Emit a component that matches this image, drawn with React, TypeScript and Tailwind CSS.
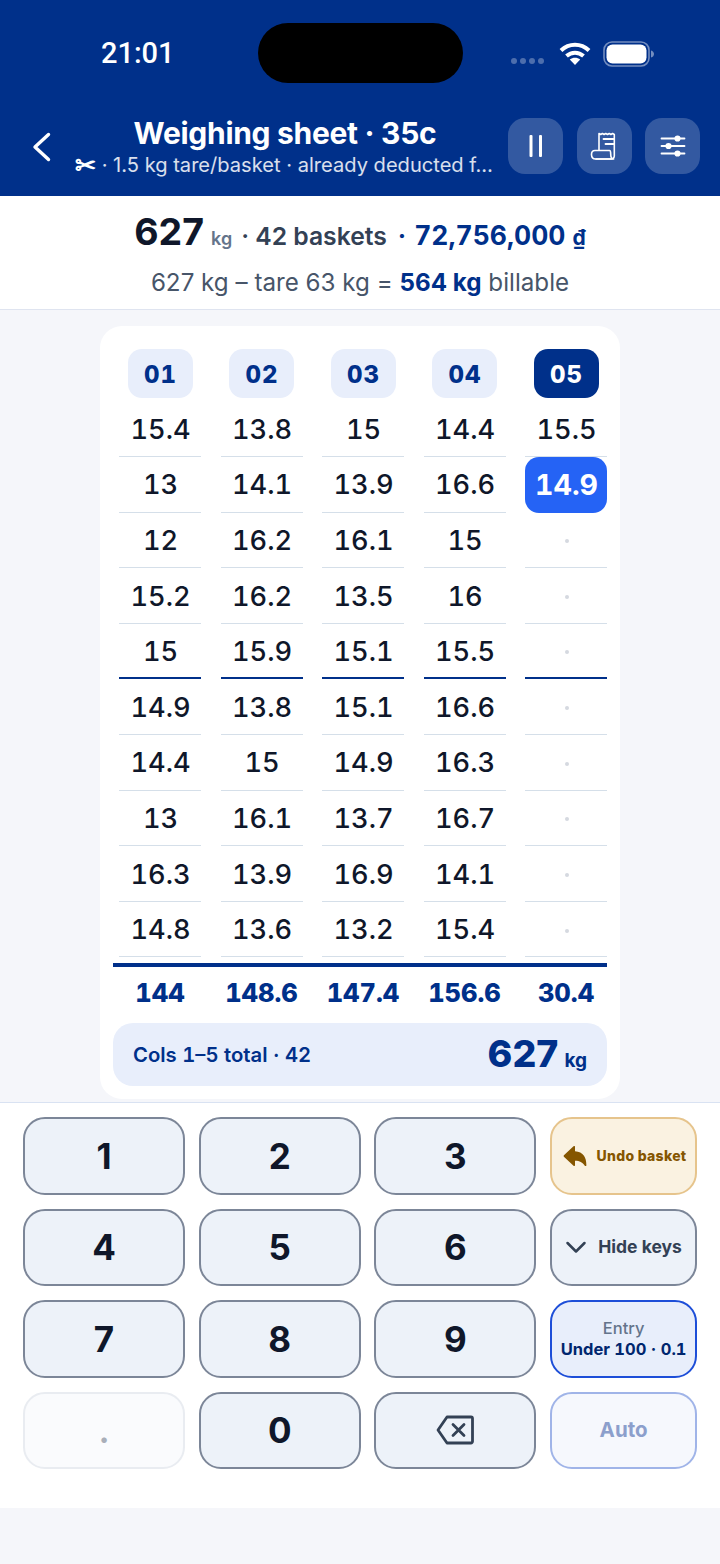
import React from "react";
import { IoArrowUndo } from "react-icons/io5";

const cols = [
  { h: "01", v: ["15.4", "13", "12", "15.2", "15", "14.9", "14.4", "13", "16.3", "14.8"], s: "144" },
  { h: "02", v: ["13.8", "14.1", "16.2", "16.2", "15.9", "13.8", "15", "16.1", "13.9", "13.6"], s: "148.6" },
  { h: "03", v: ["15", "13.9", "16.1", "13.5", "15.1", "15.1", "14.9", "13.7", "16.9", "13.2"], s: "147.4" },
  { h: "04", v: ["14.4", "16.6", "15", "16", "15.5", "16.6", "16.3", "16.7", "14.1", "15.4"], s: "156.6" },
  { h: "05", v: ["15.5", "14.9", "", "", "", "", "", "", "", ""], s: "30.4" },
];

function HeadBtn({ children }: { children: React.ReactNode }) {
  return <div className="w-[55px] h-[56px] rounded-[17px] bg-white/20 flex items-center justify-center">{children}</div>;
}

function Key({ children }: { children: React.ReactNode }) {
  return (
    <div className="h-[77.5px] rounded-[22px] border-2 border-[#7c8698] bg-[#edf2f9] flex items-center justify-center text-[35px] font-bold text-[#0f172a]">
      {children}
    </div>
  );
}

export default function App() {
  return (
    <div className="w-[720px] h-[1564px] bg-[#f5f6fa] overflow-hidden font-['Inter',sans-serif]">
      <header className="h-[196px] bg-[#00308a] text-white flex flex-col">
        <div className="h-[118px] relative flex items-start">
          <span className="ml-[101px] mt-[36px] text-[29px] leading-[34px] font-medium font-['Roboto',sans-serif]">21:01</span>
          <div className="absolute left-[258px] top-[23px] w-[205px] h-[60px] rounded-[30px] bg-black" />
          <div className="absolute left-[511px] top-[58px] flex gap-[3px]">
            {[0, 1, 2, 3].map((i) => (
              <span key={i} className="w-[6px] h-[6px] rounded-full bg-white/30" />
            ))}
          </div>
          <svg className="absolute left-[559px] top-[41px]" width="32" height="25" viewBox="0 0 32 25" fill="none" stroke="#fff" strokeWidth="4">
            <path d="M2 9.5C10 1.8 22 1.8 30 9.5" />
            <path d="M7.5 15C12.5 10.5 19.5 10.5 24.5 15" />
            <path d="M16 24l-5.2-5.4c3-2.4 7.4-2.4 10.4 0z" fill="#fff" stroke="none" />
          </svg>
          <svg className="absolute left-[603px] top-[41px]" width="51" height="26" viewBox="0 0 51 26" fill="none">
            <rect x="1" y="1" width="45" height="24" rx="8" stroke="#fff" strokeOpacity="0.45" strokeWidth="1.6" />
            <rect x="3.5" y="3.5" width="40" height="19" rx="6" fill="#fff" />
            <path d="M48 9.5c2 .5 3 2 3 3.5s-1 3-3 3.5z" fill="#fff" fillOpacity="0.45" />
          </svg>
        </div>
        <div className="flex items-start">
          <svg className="ml-[32px] mt-[14px] shrink-0" width="20" height="30" viewBox="0 0 20 30" fill="none" stroke="#fff" strokeWidth="3.4" strokeLinecap="round" strokeLinejoin="round">
            <path d="M16.5 2.5L3 15l13.5 12.5" />
          </svg>
          <div className="ml-[23px] w-[420px] flex flex-col items-center">
            <div className="text-[30px] leading-[30px] font-bold tracking-[-0.01em] whitespace-nowrap">Weighing sheet · 35c</div>
            <div className="w-[420px] text-[20.1px] leading-[26px] mt-[4px] text-white/85 whitespace-nowrap flex items-center">
              <span className="text-[25px] leading-[26px] font-bold text-white">✂</span>
              <span>&nbsp;· 1.5 kg tare/basket · already deducted f…</span>
            </div>
          </div>
          <div className="ml-[13px] flex gap-[13.5px]">
            <HeadBtn>
              <svg width="16" height="24" viewBox="0 0 16 24" fill="#fff">
                <rect x="1.5" y="1" width="3" height="22" rx="1" />
                <rect x="11" y="1" width="3" height="22" rx="1" />
              </svg>
            </HeadBtn>
            <HeadBtn>
              <svg width="30" height="30" viewBox="0 0 30 30" fill="none" stroke="#fff" strokeWidth="1.6" strokeLinejoin="round" strokeLinecap="round">
                <path d="M10 19V2.5l1.7 1 1.7-1 1.7 1 1.7-1 1.7 1 1.7-1 1.7 1 1.7-1 1.7 1V25a3 3 0 0 1-3 3H7" />
                <path d="M14.5 8h10M16.5 13h8" strokeWidth="1.8" />
                <path d="M2.5 23.5c0-2.5 1.3-4 3.500-4h14.5c1.2 0 1.2 1 1.2 3.5 0 3.2 1 5 3 5H6.5c-2.5 0-4-1.5-4-4.500z" />
              </svg>
            </HeadBtn>
            <HeadBtn>
              <svg width="26" height="22" viewBox="0 0 26 22" fill="none" stroke="#fff" strokeWidth="1.8" strokeLinecap="round">
                <path d="M1.5 3.5h23M1.5 11h23M1.5 18.5h23" />
                <circle cx="17.5" cy="3.5" r="2.2" fill="#fff" />
                <circle cx="8.5" cy="11" r="2.2" fill="#fff" />
                <circle cx="17.5" cy="18.5" r="2.2" fill="#fff" />
              </svg>
            </HeadBtn>
          </div>
        </div>
      </header>

      <section className="h-[114px] bg-white border-b border-[#dfe4f0] flex flex-col items-center">
        <div className="mt-[8px] h-[50px] flex items-baseline whitespace-nowrap">
          <span className="text-[37.5px] font-bold text-[#0f172a]">627</span>
          <span className="ml-[7px] text-[18px] font-semibold text-[#64748b]">kg</span>
          <span className="ml-[9px] text-[24.7px] font-semibold text-[#334155]">· 42 baskets</span>
          <span className="ml-[11px] text-[25px] font-bold text-[#00308a]">·</span>
          <span className="ml-[8px] text-[26.5px] font-bold tabular-nums text-[#00308a]">72,756,000</span>
          <span className="ml-[7px] text-[21px] font-bold text-[#00308a]">₫</span>
        </div>
        <div className="mt-[13px] text-[24.2px] leading-[32px] text-[#475569] whitespace-nowrap">
          627 kg – tare 63 kg = <b className="font-bold text-[#00308a]">564 kg</b> billable
        </div>
      </section>

      <main className="flex justify-center pt-[16px] mb-[3px]">
        <div className="w-[520px] h-[773px] bg-white rounded-[22px] px-[13px] pt-[23px]">
          <div className="pl-[6px] grid grid-cols-[82px_82px_82px_82px_82px] gap-x-[19.5px]">
            {cols.map((c, ci) => (
              <div key={c.h} className="flex flex-col items-stretch">
                <div
                  className={
                    ci === 4
                      ? "mx-auto w-[65px] h-[49px] mb-[3.5px] pt-[2px] pl-[1px] rounded-[14px] bg-[#00308a] text-white flex items-center justify-center text-[24px] font-extrabold tabular-nums tracking-[0.04em]"
                      : "mx-auto w-[65px] h-[49px] mb-[3.5px] pt-[2px] pl-[1px] rounded-[14px] bg-[#e8eefb] text-[#00308a] flex items-center justify-center text-[24px] font-extrabold tabular-nums tracking-[0.04em]"
                  }
                >
                  {c.h}
                </div>
                {c.v.map((v, i) => {
                  if (ci === 4 && i === 1) {
                    return (
                      <div key={i} className="h-[55.6px] pl-[1px] pt-[1px] rounded-[14px] bg-[#2563f5] text-white flex items-center justify-center text-[28.5px] font-bold tabular-nums">
                        {v}
                      </div>
                    );
                  }
                  return (
                    <div
                      key={i}
                      className={
                        i === 4
                          ? "h-[55.6px] pt-[3px] pl-[1px] border-b-[2.5px] border-[#00308a] flex items-center justify-center text-[27.2px] font-medium tabular-nums text-[#0f172a]"
                          : "h-[55.6px] pt-[3px] pl-[1px] border-b-[1.5px] border-[#d5dfe9] flex items-center justify-center text-[27.2px] font-medium tabular-nums text-[#0f172a]"
                      }
                    >
                      {v || <span className="w-[4px] h-[4px] rounded-full bg-[#d5d9e0]" />}
                    </div>
                  );
                })}
              </div>
            ))}
          </div>
          <div className="mt-[6px] h-[3.5px] bg-[#00308a]" />
          <div className="pl-[6px] h-[56px] pb-[4px] grid grid-cols-[82px_82px_82px_82px_82px] gap-x-[19.5px] items-center">
            {cols.map((c) => (
              <div key={c.h} className="text-center text-[25.5px] font-extrabold tabular-nums text-[#00308a] whitespace-nowrap">
                {c.s}
              </div>
            ))}
          </div>
          <div className="h-[63px] rounded-[20px] bg-[#e8eefb] text-[#00308a] flex items-center justify-between px-[20px]">
            <span className="text-[20.3px] font-semibold tabular-nums pt-[1px]">Cols 1–5 total · 42</span>
            <span className="flex items-baseline">
              <span className="text-[37.5px] font-extrabold">627</span>
              <span className="ml-[6px] text-[19px] font-bold">kg</span>
            </span>
          </div>
        </div>
      </main>

      <section className="w-[720px] h-[406px] bg-white border-t border-[#d9e2f2] pl-[23px] pt-[14px]">
        <div className="grid grid-cols-[162px_162px_162px_147px] gap-x-[13.7px] gap-y-[14px]">
          <Key>1</Key>
          <Key>2</Key>
          <Key>3</Key>
          <div className="h-[77.5px] rounded-[22px] border-2 border-[#e6c48c] bg-[#faf2e1] flex items-center justify-center gap-[8px] text-[14px] font-extrabold tracking-[0.02em] text-[#855600] whitespace-nowrap">
            <IoArrowUndo size={28} color="#855600" />
            Undo basket
          </div>
          <Key>4</Key>
          <Key>5</Key>
          <Key>6</Key>
          <div className="h-[77.5px] rounded-[22px] border-2 border-[#7c8698] bg-[#edf2f9] flex items-center justify-center gap-[11px] text-[17.5px] font-bold text-[#334155] whitespace-nowrap">
            <svg width="22" height="13" viewBox="0 0 22 13" fill="none" stroke="#334155" strokeWidth="2.5" strokeLinecap="round" strokeLinejoin="round">
              <path d="M2.5 2l8.5 8.5L19.5 2" />
            </svg>
            Hide keys
          </div>
          <Key>7</Key>
          <Key>8</Key>
          <Key>9</Key>
          <div className="h-[77.5px] rounded-[22px] border-2 border-[#1d4ed8] bg-[#e8eefb] flex flex-col items-center justify-center whitespace-nowrap">
            <span className="text-[16.5px] leading-[21px] font-medium text-[#64748b]">Entry</span>
            <span className="text-[16.5px] leading-[21px] font-bold tabular-nums text-[#00266e]">Under 100 · 0.1</span>
          </div>
          <div className="h-[77.5px] rounded-[22px] border-2 border-[#e9ecf1] bg-[#fafbfd] flex items-center justify-center text-[35px] font-semibold text-[#a9afb9]">.</div>
          <Key>0</Key>
          <Key>
            <svg width="38" height="30" viewBox="0 0 38 30" fill="none" stroke="#334155" strokeWidth="2.8" strokeLinejoin="round" strokeLinecap="round">
              <path d="M11 2h24a1.5 1.5 0 0 1 1.5 1.5v23A1.5 1.5 0 0 1 35 28H11L2 15z" />
              <path d="M17 9.5l11 11M28 9.5l-11 11" />
            </svg>
          </Key>
          <div className="h-[77.5px] rounded-[22px] border-2 border-[#a0b4e8] bg-[#f6f8fd] flex items-center justify-center text-[20.5px] font-bold text-[#8c9fcc]">Auto</div>
        </div>
      </section>
    </div>
  );
}
